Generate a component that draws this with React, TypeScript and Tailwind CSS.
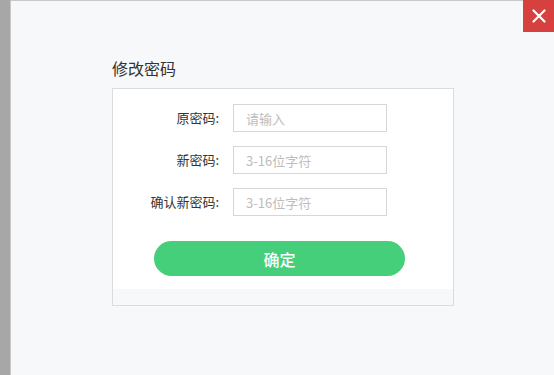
import React from 'react';

const fields = [
  { label: '原密码:', placeholder: '请输入' },
  { label: '新密码:', placeholder: '3-16位字符' },
  { label: '确认新密码:', placeholder: '3-16位字符' },
];

export default function App() {
  return (
    <div
      className="flex h-[375px] w-[554px] overflow-hidden bg-[#a7a7a7]"
      style={{ fontFamily: '"Noto Sans CJK SC", "Liberation Sans", sans-serif' }}
    >
      <div className="ml-[10px] flex-1 border-l border-t border-[#c8c8c8] bg-[#f7f8fa] relative">
        <button className="absolute right-0 top-[-1px] flex h-[32px] w-[31px] items-center justify-center bg-[#d6403e]">
          <svg width="14" height="14" viewBox="0 0 14 14">
            <path d="M1.5 1.5 L12.5 12.5 M12.5 1.5 L1.5 12.5" stroke="#fff" strokeWidth="2.2" strokeLinecap="round" />
          </svg>
        </button>

        <div className="ml-[101px] mt-[55px] w-[342px]">
          <h2 className="text-[16px] leading-[24px] text-[#333]">修改密码</h2>
          <div className="mt-[8px] border border-[#dcdcdc] bg-[#f7f8fa]">
            <div className="bg-white pt-[15px] pb-[13px]">
              {fields.map((f) => (
                <div key={f.label} className="mb-[14px] flex h-[28px] items-center">
                  <label className="w-[106px] text-right text-[13px] text-[#333]">{f.label}</label>
                  <input
                    className="ml-[14px] h-[28px] w-[154px] border border-[#d6d6d6] px-[12px] text-[13px] text-[#333] outline-none placeholder:text-[#bdbdbd]"
                    placeholder={f.placeholder}
                  />
                </div>
              ))}
              <button className="ml-[41px] mt-[11px] h-[35px] w-[251px] rounded-full bg-[#45cf7b] text-[16px] font-medium text-white">
                确定
              </button>
            </div>
            <div className="h-[16px]" />
          </div>
        </div>
      </div>
    </div>
  );
}
